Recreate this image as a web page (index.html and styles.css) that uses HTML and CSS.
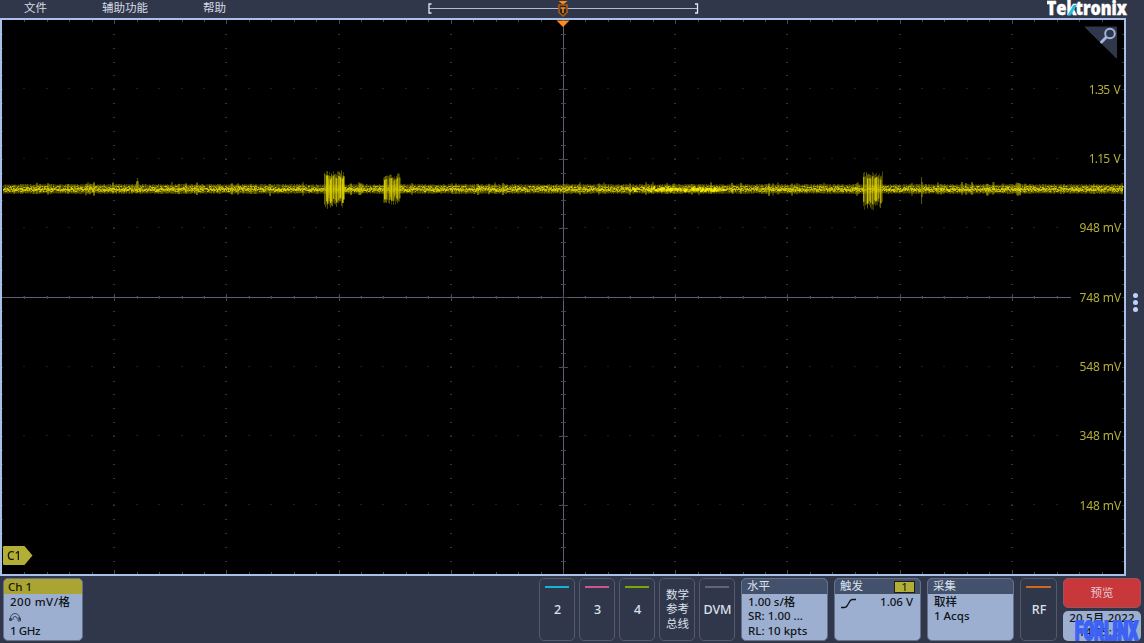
FILE: index.html
```
<!DOCTYPE html>
<html lang="zh-CN">
<head>
    <meta charset="UTF-8">
    <meta name="viewport" content="width=device-width, initial-scale=1.0">
    <title>Tektronix</title>
    <link rel="stylesheet" href="styles.css">
</head>
<body>
    <div class="scope">
        <div class="topbar">
            <div class="menu">
                <span>文件</span>
                <span>辅助功能</span>
                <span>帮助</span>
            </div>
            <svg class="record-view" width="272" height="18" viewBox="0 0 272 18">
                <path d="M1 8.5H270" stroke="#aebdd3" stroke-width="1"/>
                <path d="M3.500 4H1V13H3.500M267 4h2.500v9H267" fill="none" stroke="#dce8f5" stroke-width="1.300"/>
                <path d="M130.500 1h9l-4.500 3.500z" fill="#ff8a1e"/>
                <path d="M131 5h8v7.500l-4 3.500l-4-3.500z" fill="#2b2320" stroke="#a85c16" stroke-width="1.600"/>
                <path d="M132.500 8h5M135 8v5" stroke="#ff8a1e" stroke-width="1.500"/>
            </svg>
            <svg class="logo" width="82" height="18" viewBox="0 0 82 18">
                <text x="-.5" y="15" textLength="20" lengthAdjust="spacingAndGlyphs">Te</text>
                <text x="19.5" y="15" textLength="10" lengthAdjust="spacingAndGlyphs">k</text>
                <text x="28.5" y="15" textLength="51.5" lengthAdjust="spacingAndGlyphs">tronix</text>
                <path d="M20.500 15L26.500 5h3.500L24 15z" fill="#1fc0dc"/>
            </svg>
        </div>

        <div class="main">
            <div class="plot">
                <canvas id="trace" width="1122" height="554"></canvas>
                <svg class="trigger-mark" width="14" height="7" viewBox="0 0 14 7"><path d="M.5.5h13L7 7z" fill="#ff8a1e"/></svg>
                <svg class="zoom-btn" width="34" height="33" viewBox="0 0 34 33">
                    <path d="M1 1H32.500V32z" fill="#31374a" stroke="#31374a" stroke-linejoin="round"/>
                    <circle cx="26" cy="7.500" r="4.800" fill="none" stroke="#a3b7dd" stroke-width="1.900"/>
                    <path d="M22 11.500L17.500 16" stroke="#a3b7dd" stroke-width="3" stroke-linecap="round"/>
                </svg>
                <div class="scale">
                    <span class="volts">1.35 V</span>
                    <span class="volts">1.15 V</span>
                    <span>948 mV</span>
                    <span>748 mV</span>
                    <span>548 mV</span>
                    <span>348 mV</span>
                    <span>148 mV</span>
                </div>
                <svg class="ch-handle" width="30" height="19" viewBox="0 0 30 19">
                    <path d="M1 0H21.500L29.500 9.500L21.500 19H1Q0 19 0 18V1Q0 0 1 0z" fill="#b3ae36"/>
                    <text x="4" y="14">C1</text>
                </svg>
            </div>
            <div class="side-handle"><i></i><i></i><i></i></div>
        </div>

        <div class="bottombar">
            <div class="badge channel">
                <div class="badge-head yellow">Ch 1</div>
                <div class="badge-body">
                    <div class="vdiv">200 mV/格</div>
                    <svg width="13" height="10" viewBox="0 0 13 10"><path d="M1.500 8V6a4.500 4.500 0 0 1 9 0v2M4 8V6.500a2 2 0 0 1 4 0M.5 6.500v2h2v-2zM9 6h2.500v3H9z" fill="none" stroke="#3c4659" stroke-width="1"/></svg>
                    <div class="narrow">1 GHz</div>
                </div>
            </div>
            <div class="tools">
                <div class="btn"><i class="bar cyan"></i>2</div>
                <div class="btn"><i class="bar pink"></i>3</div>
                <div class="btn"><i class="bar green"></i>4</div>
                <div class="btn stacked">数学<br>参考<br>总线</div>
                <div class="btn"><i class="bar gray"></i>DVM</div>
                <div class="badge">
                    <div class="badge-head">水平</div>
                    <div class="badge-body">
                        <div>1.00 s/格</div>
                        <div>SR: 1.00 ...</div>
                        <div>RL: 10 kpts</div>
                    </div>
                </div>
                <div class="badge">
                    <div class="badge-head">触发<span class="source">1</span></div>
                    <div class="badge-body trigger">
                        <svg width="15" height="11" viewBox="0 0 15 11"><path d="M0 9.500h3.500q1.500 0 2.500-1.500L9 3q1-1.500 2.500-1.500H15" fill="none" stroke="#101418" stroke-width="1.400"/></svg>
                        <div>1.06 V</div>
                    </div>
                </div>
                <div class="badge">
                    <div class="badge-head">采集</div>
                    <div class="badge-body">
                        <div>取样</div>
                        <div>1 Acqs</div>
                    </div>
                </div>
                <div class="btn rf"><i class="bar orange"></i>RF</div>
                <div class="status">
                    <div class="preview">预览</div>
                    <div class="clock"><div>20 5月 2022</div><div>14:15:24</div></div>
                    <svg class="watermark" width="66" height="23" viewBox="0 0 66 23"><text x="1" y="20" textLength="63" lengthAdjust="spacingAndGlyphs">FORLINX</text></svg>
                </div>
            </div>
        </div>
    </div>

    <script src="app.js"></script>
</body>
</html>
```
FILE: styles.css
```
* { margin: 0; padding: 0; box-sizing: border-box; }
body {
    font-family: 'Noto Sans', 'Noto Sans CJK SC', sans-serif;
    background: #31374a;
    overflow: hidden;
}
.scope {
    width: 1144px;
    height: 643px;
    display: flex;
    flex-direction: column;
}
.topbar {
    height: 18px;
    display: grid;
    grid-template-columns: 428px 619px 1fr;
}
.menu {
    display: flex;
    gap: 55px;
    padding-left: 24px;
    font-size: 11.5px;
    line-height: 15px;
    color: #d5dbe6;
}
.logo text { font: 800 18.5px 'Open Sans', sans-serif; fill: #fff; stroke: #fff; stroke-width: .4; }
.main { height: 558px; display: flex; }
.plot {
    position: relative;
    width: 1126px;
    border: 2px solid #a9c0ea;
    background: #000;
}
#trace { display: block; }
.trigger-mark { position: absolute; left: 554px; top: 0; }
.zoom-btn { position: absolute; right: 6px; top: 6px; }
.scale {
    position: absolute;
    right: 3px;
    top: 34.7px;
    display: flex;
    flex-direction: column;
    text-align: right;
    font-size: 12px;
    letter-spacing: -.1px;
    color: #b3ae36;
}
.scale span { height: 69.35px; line-height: 69.35px; }
.scale .volts { letter-spacing: -.8px; word-spacing: 2px; padding-right: 1px; }
.ch-handle { position: absolute; left: 1px; top: 526px; }
.ch-handle text { font-size: 12px; font-weight: 500; fill: #15170a; }
.side-handle {
    flex: 1;
    display: flex;
    flex-direction: column;
    align-items: center;
    justify-content: center;
    gap: 2px;
    padding-top: 10px;
}
.side-handle i { width: 5px; height: 5px; border-radius: 50%; background: #b9d2ff; }
.bottombar {
    flex: 1;
    display: flex;
    justify-content: space-between;
    padding: 2px 3px;
}
.tools { display: flex; gap: 4px; }
.btn {
    position: relative;
    width: 36px;
    padding-left: 1px;
    border: 1px solid #545a68;
    border-radius: 5px;
    color: #dbe2ee;
    font-size: 12.5px;
    font-weight: 500;
    display: flex;
    align-items: center;
    justify-content: center;
}
.btn.stacked { font-size: 11.5px; font-weight: 400; line-height: 14.6px; }
.bar { position: absolute; top: 7px; left: 5px; right: 5px; height: 2px; }
.cyan { background: #12b5d2; }
.pink { background: #cf5687; }
.green { background: #79a800; }
.gray { background: #62666e; }
.orange { background: #cf6a1d; }
.badge {
    width: 87px;
    margin-left: 2px;
    border: 1px solid #64718a;
    border-radius: 5px;
    background: #9dafd1;
    color: #101418;
    font-size: 11.5px;
    font-weight: 500;
    overflow: hidden;
}
.badge-head {
    height: 15px;
    padding: 0 5px;
    line-height: 14px;
    font-weight: 400;
    background: #43516c;
    color: #dbe2ee;
    display: flex;
    justify-content: space-between;
}
.badge-body { padding: 1px 0 0 6px; line-height: 14.4px; white-space: nowrap; }
.channel { width: 80px; margin-left: 0; }
.channel .badge-head { padding-left: 4px; line-height: 15px; font-weight: 500; }
.channel svg { display: block; margin: 3px 0 2px -1px; }
.vdiv { letter-spacing: .5px; }
.narrow { letter-spacing: -.4px; }
.badge-head.yellow { background: #aaa532; color: #15170a; }
.source {
    width: 21px;
    height: 12px;
    margin-top: 2px;
    border: 1px solid #1d2018;
    background: #b3ae36;
    color: #101418;
    text-align: center;
    line-height: 10px;
}
.trigger { display: flex; justify-content: space-between; padding-right: 7px; }
.trigger svg { margin-top: 3px; }
.rf { width: 37px; margin-left: 2px; }
.status {
    position: relative;
    width: 78px;
    margin-left: 2px;
    display: flex;
    flex-direction: column;
    gap: 3px;
}
.preview {
    height: 30px;
    border: 1px solid #98545f;
    border-radius: 5px;
    background: #c8373a;
    color: #e5c8d0;
    font-size: 11.5px;
    line-height: 27px;
    text-align: center;
}
.clock {
    flex: 1;
    border-radius: 5px;
    background: #9dafd1;
    color: #101418;
    font-size: 11.5px;
    font-weight: 500;
    letter-spacing: .2px;
    line-height: 14px;
    text-align: center;
    white-space: nowrap;
    overflow: hidden;
}
.watermark { position: absolute; left: 11px; top: 42px; }
.watermark text { font: 900 25px Roboto, sans-serif; fill: #3c62f5; stroke: #3c62f5; stroke-width: 2.2; }
```
FILE: app.js
```
const canvas = document.getElementById('trace');
const ctx = canvas.getContext('2d');
const W = canvas.width, H = canvas.height;
const dx = W / 10, dy = 69.35;
const mean = 169;

// small seeded generator so the trace is the same on every load
let seed = 7;
function rnd() {
    seed = (seed * 16807) % 2147483647;
    return seed / 2147483647;
}

function drawGrid() {
    ctx.fillStyle = '#30343f';
    for (let i = 0; i <= 10; i++) {
        for (let j = 1; j < 40; j++) {
            ctx.fillRect(Math.min(Math.round(i * dx) - 1, W - 2), Math.round(j * dy / 5), 2, 1);
        }
    }
    ctx.fillStyle = '#1b1d23';
    for (let j = 1; j < 8; j++) {
        for (let i = 1; i < 48; i++) {
            ctx.fillRect(Math.round(i * dx / 5) - 1, Math.round(j * dy) - 1, 2, 1);
        }
    }
    ctx.fillStyle = '#5d6174';
    ctx.fillRect(561, 0, 1, H);
    ctx.fillRect(0, 277, 1069, 1);
    ctx.fillStyle = '#444857';
    for (let i = 1; i < 50; i++) {
        const x = Math.round(i * dx / 5);
        const n = i % 5 ? 2 : 4;
        ctx.fillRect(x, 0, 1, n);
        ctx.fillRect(x, H - n, 1, n);
        if (x < 1069) ctx.fillRect(x, 278 - n, 1, n * 2 - 1);
    }
    for (let j = 1; j < 40; j++) {
        const n = j % 5 ? 2 : 4;
        ctx.fillRect(561 - n, Math.round(j * dy / 5), n * 2 + 1, 1);
    }
}

// a column of the trace, in px above and below the mean
function column(x, up, down, w = 1) {
    ctx.fillStyle = 'rgba(150,143,0,' + (0.35 + rnd() * 0.4) + ')';
    ctx.fillRect(x, mean - up, w, up + down);
}

function drawTrace() {
    for (let x = 1; x < 1121; x++) {
        column(x, 4 + rnd(), 4 + rnd());
        if (rnd() > 0.93) column(x, 5 + rnd() * 2, 4 + rnd() * 3, 2);
        for (let k = 0; k < 3; k++) {
            ctx.fillStyle = 'rgba(235,225,0,' + (0.25 + rnd() * 0.5) + ')';
            ctx.fillRect(x, mean - 3 + Math.floor(rnd() * 6), 1 + rnd(), 1);
        }
        ctx.fillStyle = 'rgba(232,220,0,' + (0.35 + rnd() * 0.5) + ')';
        ctx.fillRect(x, mean - Math.floor(rnd() * 2), 1, 2);
    }
    for (let i = 0; i < 70; i++) {
        ctx.fillStyle = 'rgba(250,240,0,0.8)';
        ctx.fillRect(630 + rnd() * 92, mean - 2 + rnd() * 3.5, 2, 2);
    }
    burst(322, 342, 19, 20);
    burst(381, 398, 16, 16);
    burst(861, 881, 19, 21);
    column(135, 11, 0);
    column(134, 8, 0, 3);
    column(919, 12, 15);
    column(919, 7, 8, 2);
}

function burst(from, to, up, down) {
    for (let x = from; x < to; x++) {
        const a = up * (0.65 + rnd() * 0.35), b = down * (0.6 + rnd() * 0.4);
        column(x, a, b);
        if (rnd() > 0.45) {
            ctx.fillStyle = 'rgba(225,214,0,' + (0.4 + rnd() * 0.5) + ')';
            ctx.fillRect(x, mean - a * 0.75, 1.6, (a + b) * 0.75);
        }
    }
}

drawGrid();
drawTrace();
```
